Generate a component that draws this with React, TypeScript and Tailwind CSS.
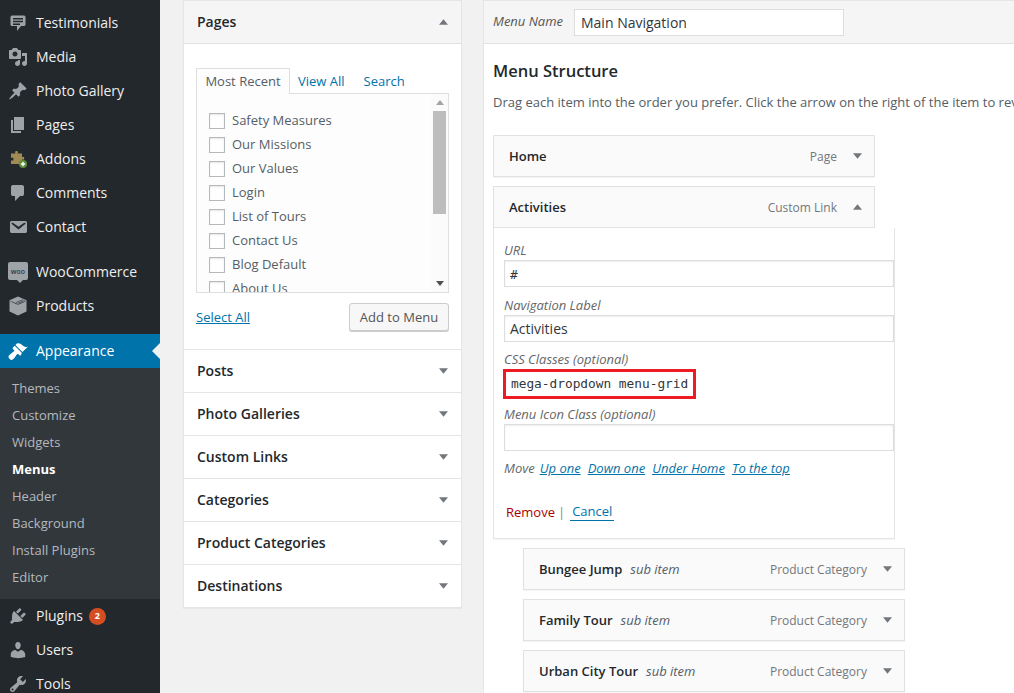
import React from 'react';

const font = { fontFamily: '"Open Sans", "Liberation Sans", sans-serif' };

const Icon = ({ d, className = 'text-[#9ea3a8]' }: { d: string; className?: string }) => (
  <svg viewBox="0 0 20 20" className={`w-5 h-5 fill-current ${className}`}>
    <path d={d} fillRule="evenodd" />
  </svg>
);

const icons = {
  comment: 'M5 2h9q.82 0 1.41.59T16 4v7q0 .82-.59 1.41T14 13h-2l-5 5v-5H5q-.82 0-1.41-.59T3 11V4q0-.82.59-1.41T5 2z',
  testimonial:
    'M4 2.500h12q1.500 0 1.500 1.500v7.500q0 1.500-1.500 1.500h-3l-4 5v-5H4q-1.500 0-1.500-1.500V4q0-1.500 1.500-1.500zm1 2.500v1.500h10V5zm0 2.800v1.500h10V7.800zm0 2.700V12h7v-1.500z',
  media:
    'M13 11V4c0-.55-.45-1-1-1h-1.670L9 1H5L3.670 3H2c-.55 0-1 .45-1 1v7c0 .55.45 1 1 1h10c.55 0 1-.45 1-1zM7 4.500c1.380 0 2.500 1.120 2.500 2.500S8.380 9.500 7 9.500 4.500 8.380 4.500 7 5.620 4.500 7 4.500zM14 6h5v10.500c0 1.380-1.120 2.500-2.500 2.500S14 17.880 14 16.500s1.120-2.500 2.500-2.500c.17 0 .34.02.5.05V9h-3V6zm-4 8.050V13h2v3.500c0 1.380-1.120 2.500-2.500 2.500S7 17.880 7 16.500 8.120 14 9.500 14c.17 0 .34.02.5.05z',
  pin: 'M10.440 3.020l1.820-1.820 6.360 6.350-1.830 1.820c-1.050-.68-2.480-.57-3.410.36l-.75.75c-.92.93-1.040 2.350-.35 3.410l-1.830 1.820-2.410-2.410-2.800 2.790c-.42.42-3.380 2.710-3.800 2.290s1.860-3.390 2.280-3.810l2.790-2.790L4.100 9.360l1.830-1.820c1.050.69 2.480.57 3.400-.36l.75-.75c.93-.92 1.050-2.350.36-3.410z',
  page: 'M6 15V2h10v13H6zm-1 1h8v2H3V5h2v11z',
  email:
    'M3.870 4h13.250C18.370 4 19 4.590 19 5.790v8.420c0 1.190-.63 1.790-1.880 1.790H3.870c-1.250 0-1.880-.6-1.880-1.790V5.790c0-1.200.63-1.790 1.880-1.790zm6.620 8.600l6.740-5.530c.24-.2.43-.66.13-1.070-.29-.41-.82-.42-1.170-.17l-5.700 3.860L4.800 5.830c-.35-.25-.88-.24-1.170.17-.3.41-.11.87.13 1.070z',
  box: 'M10 .5l8.500 3.700v11.300L10 19.500l-8.500-4V4.200zM3 4.500l7 3 7-3-.8-.35-7 3-.9-.4 7-3-.8-.35-7 3L3 4.500zm6.700 3.600L2.500 5v.6l7.200 3.100zm.6 0v.6l7.200-3.100V5z',
  brush:
    'M14.480 11.060L7.410 3.990l1.500-1.500c.5-.56 2.300-.47 3.510.32 1.210.8 1.430 1.280 2.910 2.100 1.180.64 2.450 1.260 4.450.85zm-.71.71L6.700 4.700 4.930 6.470c-.39.39-.39 1.020 0 1.410l1.060 1.060c.39.39.39 1.030 0 1.420-.6.6-1.430 1.150-2.210 1.680-1.100.75-2.880 2.300-3.280 3.200-.3.700.4 2 1.100 2.700.8.800 1.900 1.300 2.600.9.900-.5 2.500-2.300 3.200-3.400.5-.8 1.100-1.600 1.700-2.200.39-.39 1.030-.39 1.420 0l1.060 1.060c.39.39 1.020.39 1.410 0z',
  plugin:
    'M13.110 4.360L9.870 7.600 8 5.730l3.240-3.240c.35-.34 1.050-.2 1.560.32.52.51.66 1.210.31 1.550zm-8 1.770l.91-1.120 9.010 9.010-1.190.84c-.71.71-2.630 1.160-3.820 1.160H6.140L4.900 17.260c-.59.59-1.540.59-2.120 0-.59-.58-.59-1.530 0-2.120l1.240-1.240v-3.880c0-1.130.4-3.190 1.090-3.890zm7.260 3.970l3.240-3.240c.34-.35 1.040-.21 1.550.31.52.51.66 1.210.31 1.550l-3.240 3.250z',
  users:
    'M10 9.250c-2.270 0-2.730-3.440-2.730-3.440C7 4.020 7.820 2 9.970 2c2.160 0 2.980 2.020 2.710 3.810 0 0-.41 3.440-2.680 3.440zm0 2.570L12.720 10c2.390 0 4.520 2.330 4.520 4.530v2.490s-3.650 1.130-7.240 1.130c-3.650 0-7.240-1.130-7.240-1.130v-2.490c0-2.250 1.940-4.480 4.470-4.480z',
  tools:
    'M16.680 9.770c-1.340 1.340-3.300 1.670-4.950.99l-5.410 6.520c-.99.99-2.590.99-3.580 0s-.99-2.590 0-3.570l6.520-5.420c-.68-1.650-.35-3.610.99-4.950 1.280-1.280 3.120-1.620 4.720-1.060l-2.890 2.890 2.820 2.820 2.860-2.870c.53 1.580.18 3.390-1.080 4.650zM3.810 16.210c.4.39 1.040.39 1.430 0 .4-.4.4-1.040 0-1.430-.39-.4-1.030-.4-1.430 0-.39.39-.39 1.030 0 1.430z',
};

// puzzle piece with the small green plus
const AddonsIcon = () => (
  <svg viewBox="0 0 20 20" className="w-5 h-5">
    <path
      fill="#a08b52"
      d="M7 3c0-1.500 3-1.500 3 0 0 .6-.4 1-.4 1.500H14v3.600c.6 0 1-.4 1.500-.4 1 0 1 3 0 3-.5 0-.9-.4-1.500-.4V15H3v-3.800c.6 0 1 .5 1.500.5 1.300 0 1.300-3.200 0-3.200-.5 0-.9.5-1.500.5V4.500h4.400C7.400 4 7 3.600 7 3z"
    />
    <circle cx="15" cy="15" r="4" fill="#5b8c3a" />
    <path fill="#fff" d="M14.300 12.800h1.400v1.500h1.500v1.400h-1.500v1.500h-1.400v-1.500h-1.500v-1.400h1.500z" />
  </svg>
);

const WooIcon = () => (
  <div className="relative w-5 h-[18px] -mt-[2px] rounded-[2px] bg-[#9ea3a8] flex items-center justify-center">
    <span className="text-[7px] leading-none font-semibold text-[#32373c]">woo</span>
    <div className="absolute left-[9px] -bottom-[3px] w-0 h-0 border-x-[3px] border-x-transparent border-t-[3px] border-t-[#9ea3a8]" />
  </div>
);

const NavItem = ({ icon, label, badge }: { icon: React.ReactNode; label: string; badge?: string }) => (
  <div className="h-[34px] flex items-center text-[14px] text-[#eeeeee]">
    <div className="w-9 pl-2 flex items-center shrink-0">{icon}</div>
    <span className="mb-[2px]">{label}</span>
    {badge && (
      <span className="ml-[6px] w-[17px] h-[17px] rounded-full bg-[#d54e21] text-white text-[9px] font-bold flex items-center justify-center">
        {badge}
      </span>
    )}
  </div>
);

const subItems = ['Themes', 'Customize', 'Widgets', 'Menus', 'Header', 'Background', 'Install Plugins', 'Editor'];

const Sidebar = () => (
  <div className="w-40 shrink-0 bg-[#23282d] pt-[6px]">
    <NavItem icon={<Icon d={icons.testimonial} />} label="Testimonials" />
    <NavItem icon={<Icon d={icons.media} />} label="Media" />
    <NavItem icon={<Icon d={icons.pin} />} label="Photo Gallery" />
    <NavItem icon={<Icon d={icons.page} />} label="Pages" />
    <NavItem icon={<AddonsIcon />} label="Addons" />
    <NavItem icon={<Icon d={icons.comment} />} label="Comments" />
    <NavItem icon={<Icon d={icons.email} />} label="Contact" />
    <div className="h-[11px]" />
    <NavItem icon={<WooIcon />} label="WooCommerce" />
    <NavItem icon={<Icon d={icons.box} />} label="Products" />
    <div className="h-[11px]" />
    <div className="relative h-[34px] bg-[#0073aa] flex items-center text-[14px] text-white">
      <div className="w-9 pl-2 flex items-center shrink-0">
        <Icon d={icons.brush} className="text-white" />
      </div>
      <span className="mb-[2px]">Appearance</span>
      <div className="absolute right-0 top-[9px] w-0 h-0 border-y-[8px] border-y-transparent border-r-[8px] border-r-[#f1f1f1]" />
    </div>
    <div className="bg-[#32373c] pt-[7px] pb-2">
      {subItems.map((s) => (
        <div
          key={s}
          className={`h-[27px] pl-3 flex items-center text-[13px] ${
            s === 'Menus' ? 'text-white font-bold' : 'text-[#b4b9be]'
          }`}
        >
          {s}
        </div>
      ))}
    </div>
    <NavItem icon={<Icon d={icons.plugin} />} label="Plugins" badge="2" />
    <NavItem icon={<Icon d={icons.users} />} label="Users" />
    <NavItem icon={<Icon d={icons.tools} />} label="Tools" />
  </div>
);

const Arrow = ({ up = false }: { up?: boolean }) => (
  <svg viewBox="0 0 10 6" className="w-[9px] h-[6px] fill-[#72777c] shrink-0">
    <polygon points={up ? '5,0 10,6 0,6' : '0,0 10,0 5,6'} />
  </svg>
);

const pages = ['Safety Measures', 'Our Missions', 'Our Values', 'Login', 'List of Tours', 'Contact Us', 'Blog Default', 'About Us'];
const sections = ['Posts', 'Photo Galleries', 'Custom Links', 'Categories', 'Product Categories', 'Destinations'];

const LeftPanel = () => (
  <div className="w-[279px] shrink-0 self-start bg-white border border-[#e5e5e5] shadow-[0_1px_1px_rgba(0,0,0,0.04)]">
    <div className="h-[43px] bg-[#f5f5f5] border-b border-[#e1e1e1] flex items-center justify-between pl-[13px] pr-[13px]">
      <span className="mb-[2px] text-[14px] font-semibold text-[#23282d]">Pages</span>
      <Arrow up />
    </div>
    <div className="px-3 pt-6 h-[305px]">
      <div className="flex text-[13px] h-[26px]">
        <div className="w-[94px] h-[26px] bg-[#fdfdfd] border border-b-0 border-[#dfdfdf] text-[#555d66] flex items-center justify-center relative z-10">
          Most Recent
        </div>
        <span className="ml-2 leading-[26px] text-[#0073aa]">View All</span>
        <span className="ml-[19px] leading-[26px] text-[#0073aa]">Search</span>
      </div>
      <div className="-mt-px h-[200px] bg-[#fdfdfd] border border-[#dfdfdf] flex overflow-hidden">
        <div className="flex-1 pl-3 pt-[15px]">
          {pages.map((p) => (
            <div key={p} className="h-6 flex items-center text-[13px] text-[#555d66]">
              <div className="w-4 h-4 bg-white border border-[#b4b9be] shadow-[inset_0_1px_2px_rgba(0,0,0,0.1)] mr-[7px]" />
              {p}
            </div>
          ))}
        </div>
        <div className="w-[17px] flex flex-col items-center pl-[1px] pr-[1px] bg-[#fbfbfb]">
          <div className="h-[17px] flex items-center">
            <svg viewBox="0 0 10 6" className="w-2 h-[5px] fill-[#a3a3a3]">
              <polygon points="5,0 10,6 0,6" />
            </svg>
          </div>
          <div className="w-[13px] h-[103px] bg-[#bdbdbd]" />
          <div className="mt-auto h-[17px] flex items-center">
            <svg viewBox="0 0 10 6" className="w-2 h-[5px] fill-[#505050]">
              <polygon points="0,0 10,0 5,6" />
            </svg>
          </div>
        </div>
      </div>
      <div className="mt-[10px] flex items-center justify-between">
        <span className="mt-[2px] text-[13px] text-[#0073aa] underline">Select All</span>
        <div className="w-[100px] h-[28px] pt-[2px] rounded-[3px] bg-[#f7f7f7] border border-[#cccccc] shadow-[0_1px_0_#ccc] text-[13px] text-[#555] flex items-center justify-center">
          Add to Menu
        </div>
      </div>
    </div>
    {sections.map((s) => (
      <div key={s} className="h-[43px] border-t border-[#e5e5e5] flex items-center justify-between pl-[13px] pr-[13px]">
        <span className="mb-[2px] text-[14px] font-semibold text-[#23282d]">{s}</span>
        <Arrow />
      </div>
    ))}
  </div>
);

const MenuRow = ({
  title,
  type,
  sub = false,
  open = false,
}: {
  title: string;
  type: string;
  sub?: boolean;
  open?: boolean;
}) => (
  <div
    className={`w-[382px] h-[42px] bg-[#fafafa] border border-[#e1e1e1] shadow-[0_1px_1px_rgba(0,0,0,0.04)] flex items-center pl-[15px] pr-[12px] ${
      sub ? 'ml-[30px] mb-[9px]' : ''
    }`}
  >
    <span className="mt-[2px] text-[13px] font-semibold text-[#23282d]">{title}</span>
    {sub && <span className="mt-[2px] ml-2 text-[13px] italic text-[#555d66]">sub item</span>}
    <span className="mt-[2px] ml-auto mr-[16px] text-[12px] text-[#72777c]">{type}</span>
    <Arrow up={open} />
  </div>
);

const Field = ({ label, value, mono = false }: { label: string; value: string; mono?: boolean }) => (
  <div className={mono ? 'mb-[9px]' : 'mb-[8px]'}>
    <div className="h-[18px] leading-[18px] text-[13px] italic text-[#666]">{label}</div>
    <div
      className={`w-[390px] h-[27px] mt-[1px] bg-white border border-[#ddd] shadow-[inset_0_1px_2px_rgba(0,0,0,0.07)] pl-[5px] flex items-center text-[#32373c] ${
        mono ? 'text-[12.8px] pt-[2px]' : 'text-[14px]'
      }`}
      style={mono ? { fontFamily: '"DejaVu Sans Mono", monospace' } : undefined}
    >
      {value}
    </div>
  </div>
);

const RightPanel = () => (
  <div className="flex-1 min-w-0 h-[693px] bg-white border-l border-t border-[#e5e5e5] overflow-hidden">
    <div className="h-[43px] bg-[#f5f5f5] border-b border-[#e1e1e1] flex items-center pl-[9px]">
      <span className="w-[81px] text-[13px] italic text-[#555]">Menu Name</span>
      <div className="w-[270px] h-[27px] bg-white border border-[#ddd] pl-[6px] flex items-center text-[14px] text-[#32373c]">
        Main Navigation
      </div>
    </div>
    <div className="pl-[9px]">
      <h3 className="mt-[15px] text-[16.5px] leading-[24px] font-semibold text-[#23282d]">Menu Structure</h3>
      <p className="mt-[8px] text-[13px] leading-[22px] text-[#555d66] whitespace-nowrap">
        Drag each item into the order you prefer. Click the arrow on the right of the item to reveal additional
        configuration options.
      </p>
      <div className="mt-[22px] mb-[9px]">
        <MenuRow title="Home" type="Page" />
      </div>
      <MenuRow title="Activities" type="Custom Link" open />
      <div className="w-[402px] h-[311px] bg-white border border-t-0 border-[#e5e5e5] shadow-[0_1px_1px_rgba(0,0,0,0.04)] pl-[10px] pt-[13px] mb-[9px]">
        <Field label="URL" value="#" mono />
        <Field label="Navigation Label" value="Activities" />
        <div className="h-[18px] leading-[18px] text-[13px] italic text-[#666]">CSS Classes (optional)</div>
        <div
          className="-ml-px mt-[1px] w-[193px] h-[30px] border-[3px] border-[#ed1c24] bg-white pl-[5px] flex items-center text-[12.8px] text-[#32373c]"
          style={{ fontFamily: '"DejaVu Sans Mono", monospace' }}
        >
          mega-dropdown menu-grid
        </div>
        <div className="mt-[6px]">
          <Field label="Menu Icon Class (optional)" value="" />
        </div>
        <div className="mt-[8px] text-[13px] italic text-[#666] flex leading-[18px]">
          <span className="mr-[5px]">Move</span>
          <span className="mr-[7px] text-[#0073aa] underline">Up one</span>
          <span className="mr-[7px] text-[#0073aa] underline">Down one</span>
          <span className="mr-[7px] text-[#0073aa] underline">Under Home</span>
          <span className="text-[#0073aa] underline">To the top</span>
        </div>
        <div className="mt-[25px] pl-[2px] text-[13px] leading-[18px] flex items-center">
          <span className="text-[#a00]">Remove</span>
          <span className="ml-[3px] mr-[5px] text-[#82878c]">|</span>
          <span className="text-[#0073aa] border-b border-[#0073aa] px-[2px]">Cancel</span>
        </div>
      </div>
      <MenuRow title="Bungee Jump" type="Product Category" sub />
      <MenuRow title="Family Tour" type="Product Category" sub />
      <MenuRow title="Urban City Tour" type="Product Category" sub />
    </div>
  </div>
);

export default function App() {
  return (
    <div className="h-[693px] w-[1014px] flex overflow-hidden bg-[#f1f1f1]" style={font}>
      <Sidebar />
      <div className="ml-[23px] mr-[21px]">
        <LeftPanel />
      </div>
      <RightPanel />
    </div>
  );
}
